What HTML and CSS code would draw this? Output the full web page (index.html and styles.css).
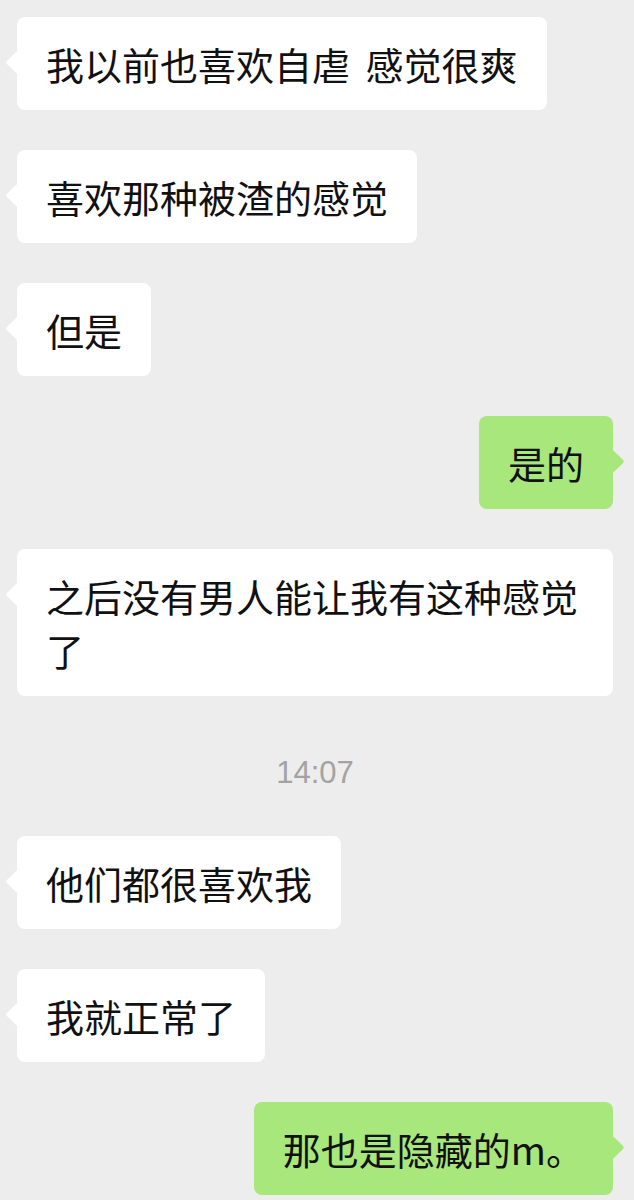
FILE: index.html
```html
<!DOCTYPE html>
<html lang="zh-CN">
<head>
  <meta charset="UTF-8" />
  <meta name="viewport" content="width=device-width, initial-scale=1" />
  <title>聊天</title>
  <link rel="stylesheet" href="styles.css">
</head>
<body>

  <div class="chat">
    <div class="row left"><div class="bubble">我以前也喜欢自虐 感觉很爽</div></div>
    <div class="row left"><div class="bubble">喜欢那种被渣的感觉</div></div>
    <div class="row left"><div class="bubble">但是</div></div>
    <div class="row right"><div class="bubble">是的</div></div>
    <div class="row left"><div class="bubble">之后没有男人能让我有这种感觉了</div></div>

    <div class="time">14:07</div>

    <div class="row left"><div class="bubble">他们都很喜欢我</div></div>
    <div class="row left"><div class="bubble">我就正常了</div></div>
    <div class="row right"><div class="bubble">那也是隐藏的m。</div></div>
  </div>

</body>
</html>
```

FILE: styles.css
```css
body {
  margin: 0;
  background: #ededed;
  font-family: "Noto Sans CJK SC", sans-serif;
  color: #111;
}
.chat {
  display: flex;
  flex-direction: column;
  gap: 40px;
  padding: 17px 21px 20px 17px;
}
.row {
  display: flex;
}
.row.right {
  justify-content: flex-end;
}
.bubble {
  position: relative;
  max-width: 538px;
  padding: 20px 29px 19px;
  font-size: 38px;
  line-height: 54px;
  word-spacing: 7px;
  background: #fff;
  border-radius: 8px;
}
.bubble::before {
  content: "";
  position: absolute;
  top: 37px;
  width: 17px;
  height: 17px;
  background: inherit;
  border-radius: 2px;
  transform: rotate(45deg);
}
.left .bubble::before {
  left: -8px;
}
.right .bubble {
  background: #a8e77b;
}
.right .bubble::before {
  right: -8px;
}
.time {
  margin: 17px 0 3px;
  text-align: center;
  font-family: "Liberation Sans", sans-serif;
  font-size: 31px;
  line-height: 40px;
  color: #a3a3a3;
}
```
